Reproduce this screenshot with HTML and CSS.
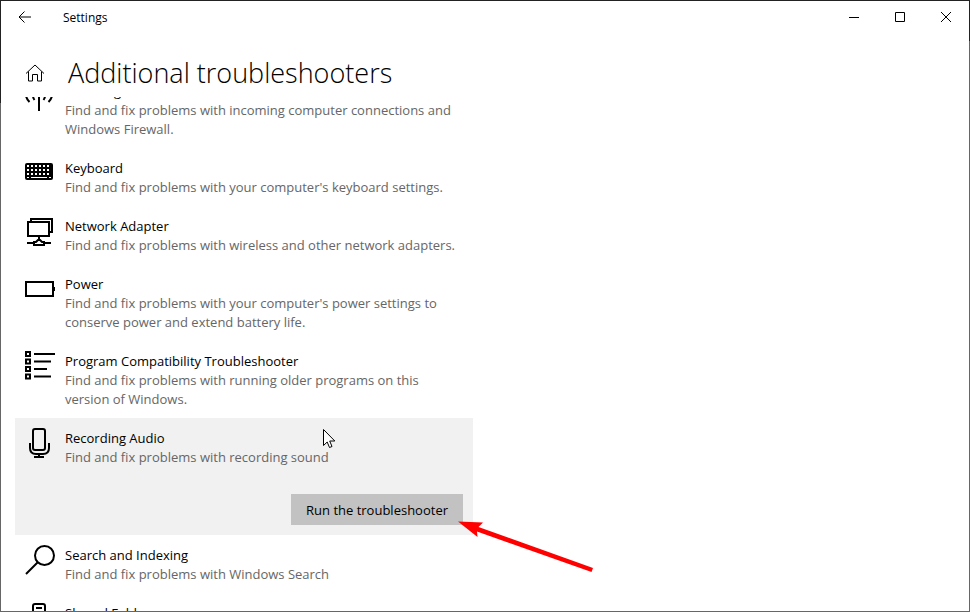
FILE: index.html
```html
<!DOCTYPE html>
<html lang="en">
<head>
    <meta charset="UTF-8">
    <meta name="viewport" content="width=device-width, initial-scale=1.0">
    <title>Settings</title>
    <link rel="stylesheet" href="styles.css">
</head>
<body>
    <div class="window">
        <div class="titlebar">
            <button class="back-btn" aria-label="Back">
                <svg width="14" height="12" viewBox="0 0 14 12"><path d="M13 6H1.5M6.5 .5L1 6l5.5 5.500"/></svg>
            </button>
            <span class="app-name">Settings</span>
            <button class="win-btn" aria-label="Minimize">
                <svg width="10" height="10" viewBox="0 0 10 10"><path d="M0 5.5h10"/></svg>
            </button>
            <button class="win-btn" aria-label="Maximize">
                <svg width="10" height="10" viewBox="0 0 10 10"><path d="M.5 .5h9v9h-9z"/></svg>
            </button>
            <button class="win-btn" aria-label="Close">
                <svg width="10" height="10" viewBox="0 0 10 10"><path d="M0 0l10 10M10 0L0 10"/></svg>
            </button>
        </div>

        <header class="page-header">
            <a href="#" class="home" aria-label="Home">
                <svg width="20" height="20" viewBox="0 0 20 20"><path d="M1 10.500L10 2l9 8.500M3.500 8.500v9.500h4v-6.500h5V18h4V8.500"/></svg>
            </a>
            <h1>Additional troubleshooters</h1>
        </header>

        <main class="content">
            <ul class="list">
                <li class="item">
                    <button class="item-head">
                        <svg class="icon" viewBox="0 0 30 30"><path d="M14 12v18M9.500 19q-3-4 0-9M18.500 19q3-4 0-9M4.500 21q-7-7 0-15M23.500 21q7-7 0-15"/></svg>
                        <span class="item-text">
                            <span class="item-title">Incoming Connections</span>
                            <span class="item-desc">Find and fix problems with incoming computer connections and Windows Firewall.</span>
                        </span>
                    </button>
                </li>
                <li class="item">
                    <button class="item-head">
                        <svg class="icon" viewBox="0 0 30 30">
                            <rect class="solid" x="0" y="5" width="28" height="17" rx="2"/>
                            <path class="keys" d="M2 8h24M2 12h24M2 16h24"/>
                            <path class="space" d="M2 19.500h2M6 19.500h16M24 19.500h2"/>
                        </svg>
                        <span class="item-text">
                            <span class="item-title">Keyboard</span>
                            <span class="item-desc">Find and fix problems with your computer's keyboard settings.</span>
                        </span>
                    </button>
                </li>
                <li class="item">
                    <button class="item-head">
                        <svg class="icon" viewBox="0 0 30 30"><path d="M3 6h21v14H3zM6 6V3h21v13h-3M14 20v4M2 27h6M20 27h6M9 29v-3h2l3-3 3 3h2v3z"/></svg>
                        <span class="item-text">
                            <span class="item-title">Network Adapter</span>
                            <span class="item-desc">Find and fix problems with wireless and other network adapters.</span>
                        </span>
                    </button>
                </li>
                <li class="item">
                    <button class="item-head">
                        <svg class="icon" viewBox="0 0 30 30"><path d="M1 8h27v14H1zM29 13v4"/></svg>
                        <span class="item-text">
                            <span class="item-title">Power</span>
                            <span class="item-desc">Find and fix problems with your computer's power settings to conserve power and extend battery life.</span>
                        </span>
                    </button>
                </li>
                <li class="item">
                    <button class="item-head">
                        <svg class="icon" viewBox="0 0 30 30"><path d="M1 1h4v4H1zM1 8.500h4v4H1zM1 16h4v4H1zM1 23.500h4v4H1zM9 3h21M9 10.500h17M9 18h13M9 25.500h17"/></svg>
                        <span class="item-text">
                            <span class="item-title">Program Compatibility Troubleshooter</span>
                            <span class="item-desc">Find and fix problems with running older programs on this version of Windows.</span>
                        </span>
                    </button>
                </li>
                <li class="item selected">
                    <button class="item-head" aria-expanded="true">
                        <svg class="icon" viewBox="0 0 30 30"><rect x="8" y="1" width="12" height="21" rx="2"/><path d="M5 15v5q0 6 6 6h7q6 0 6-6v-5M14 26v3M9 29h10"/></svg>
                        <span class="item-text">
                            <span class="item-title">Recording Audio</span>
                            <span class="item-desc">Find and fix problems with recording sound</span>
                        </span>
                    </button>
                    <button class="run-btn">Run the troubleshooter</button>
                    <svg class="cursor" width="13" height="20" viewBox="0 0 13 20"><path d="M.5 .5v16l3.700-3.500 2.300 5.500 2.500-1-2.300-5.500h5.100z"/></svg>
                    <svg class="arrow" width="136" height="52" viewBox="0 0 136 52"><path d="M0 .500L25 1.500 20.500 6 135 47l-1.500 4L19 10.500l.500 5.500z"/></svg>
                </li>
                <li class="item">
                    <button class="item-head">
                        <svg class="icon" viewBox="0 0 30 30"><circle cx="19.500" cy="10.500" r="9.500"/><path d="M12.500 17.500L1 29"/></svg>
                        <span class="item-text">
                            <span class="item-title">Search and Indexing</span>
                            <span class="item-desc">Find and fix problems with Windows Search</span>
                        </span>
                    </button>
                </li>
                <li class="item">
                    <button class="item-head">
                        <svg class="icon" viewBox="0 0 30 30"><path d="M8 30V3q0-2 2-2h8q2 0 2 2v27M11 5h6M11 9h6"/></svg>
                        <span class="item-text">
                            <span class="item-title">Shared Folders</span>
                            <span class="item-desc">Find and fix problems with accessing files and folders on other computers.</span>
                        </span>
                    </button>
                </li>
            </ul>
        </main>
    </div>
</body>
</html>
```

FILE: styles.css
```css
* {
    box-sizing: border-box;
}

body {
    margin: 0;
    font-family: "Segoe UI", "Open Sans", "Noto Sans", sans-serif;
    font-size: 13px;
    color: #000;
}

/* the padding shows the background as a thin window frame */
.window {
    display: flex;
    flex-direction: column;
    height: 100vh;
    padding: 1px;
    overflow: hidden;
    background:
        linear-gradient(#222 103px, #666 103px) left / 50% 100% no-repeat,
        linear-gradient(#222 41px, #666 41px) right / 50% 100% no-repeat;
}

button {
    margin: 0;
    padding: 0;
    border: none;
    background: none;
    font: inherit;
    color: inherit;
}

svg {
    display: block;
    fill: none;
    stroke: #000;
}

.titlebar {
    display: flex;
    flex: none;
    align-items: center;
    height: 32px;
    background: #fff;
}

.back-btn,
.win-btn {
    display: flex;
    align-items: center;
    justify-content: center;
    width: 46px;
    height: 32px;
}

.back-btn {
    width: 48px;
}

.win-btn:hover {
    background: #e5e5e5;
}

.app-name {
    flex: 1;
    padding-left: 14px;
    font-size: 12px;
}

.page-header {
    display: flex;
    flex: none;
    align-items: center;
    gap: 23px;
    height: 64px;
    padding: 16px 24px 0;
    background: #fff;
}

h1 {
    margin: 0;
    font-size: 27px;
    font-weight: 300;
    line-height: 48px;
}

.content {
    flex: 1;
    min-height: 0;
    overflow: hidden;
    background: #fff;
}

/* scrolled part way into the first entry */
.list {
    max-width: 472px;
    margin: -26px 0 0;
    padding: 0 0 0 14px;
    list-style: none;
}

.item {
    position: relative;
    padding: 10px 10px 9px;
}

.item-head {
    display: flex;
    gap: 10px;
    width: 100%;
    text-align: left;
}

.item-title,
.item-desc {
    display: block;
    line-height: 20px;
}

.item-desc {
    line-height: 19px;
    color: #666;
}

.icon {
    flex: none;
    width: 30px;
    height: 30px;
    stroke-width: 2;
}

.icon .solid {
    fill: #000;
    stroke: none;
}

.icon .keys {
    stroke: #fff;
    stroke-dasharray: 2 2;
}

.icon .space {
    stroke: #fff;
    stroke-width: 1;
}

.selected {
    padding-bottom: 10px;
    background: #f1f1f1;
}

.run-btn {
    display: block;
    height: 31px;
    margin: 27px 0 0 auto;
    padding: 0 15px;
    background: #c2c2c2;
}

.run-btn:hover {
    background: #b5b5b5;
}

.cursor {
    position: absolute;
    top: 11px;
    left: 308px;
    fill: #fff;
}

.arrow {
    position: absolute;
    top: 103px;
    left: 443px;
    fill: #f00;
    stroke: none;
}
```
